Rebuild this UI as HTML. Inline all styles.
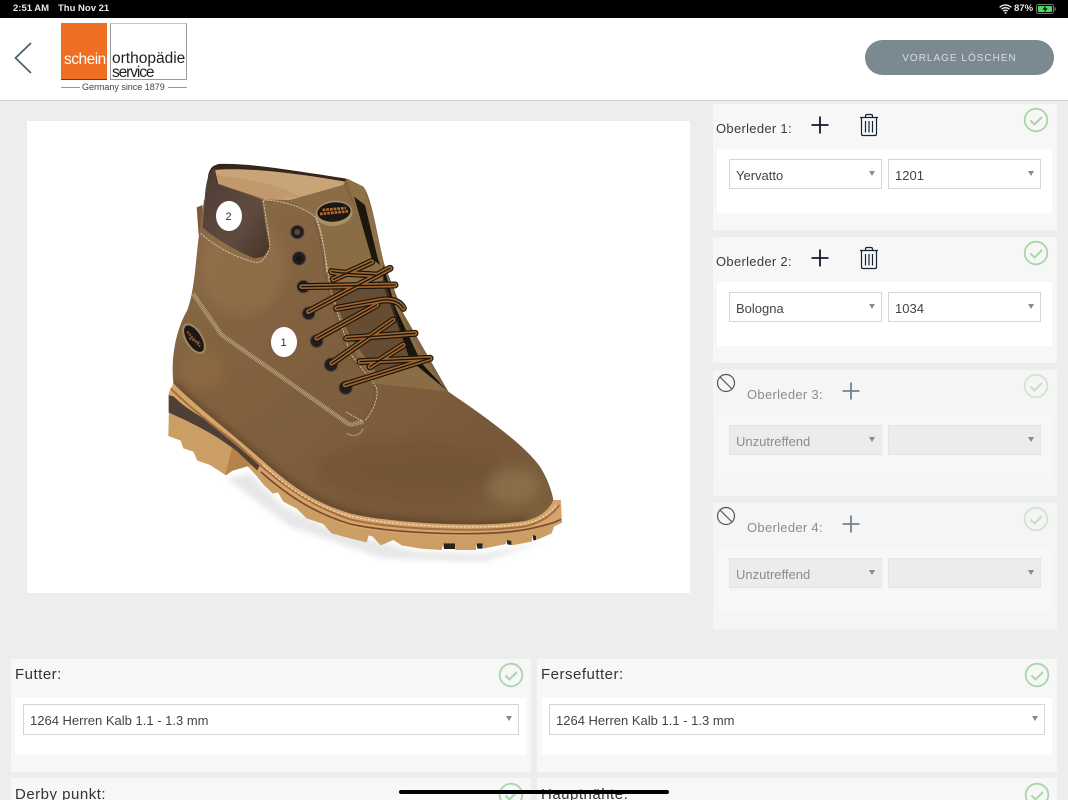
<!DOCTYPE html>
<html lang="de"><head><meta charset="utf-8"><title>Vorlage</title>
<style>
*{box-sizing:border-box}
html,body{margin:0;padding:0;width:1068px;height:800px;overflow:hidden}
#root{position:absolute;left:0;top:0;width:1068px;height:800px;overflow:hidden;background:#eceeed;font-family:"Liberation Sans","DejaVu Sans",sans-serif;color:#333}
.a{position:absolute}
.status{left:0;top:0;width:1068px;height:18px;background:#000;color:#e8e8e8;font-size:9.5px;line-height:18px;font-weight:bold}
.head{left:0;top:18px;width:1068px;height:83px;background:#fff;border-bottom:1.5px solid #cfd2d2}
.btn{left:865px;top:40px;width:189px;height:35px;border-radius:18px;background:#7b8991;color:#d9dee0;font-size:10px;letter-spacing:1px;line-height:37px;text-align:center}
.panel{background:#f7f7f7}
.inner{background:#fff}
.sel{background:#fff;border:1px solid #d4d6d6;border-bottom-width:1.5px;font-size:13px;color:#444;padding-left:6px;line-height:31px;white-space:nowrap}
.sel:after{content:"";position:absolute;right:6px;top:11px;border-left:3.5px solid transparent;border-right:3.5px solid transparent;border-top:5px solid #8a8a8a}
.lab{font-size:13px;letter-spacing:.3px;color:#3c3c3c;white-space:nowrap}
.lab2{font-size:15px;letter-spacing:.5px;color:#333;white-space:nowrap}
svg{display:block}
</style></head><body><div id="root">
<div class="a status"><span class="a" style="left:13px;white-space:nowrap">2:51 AM</span><span class="a" style="left:58px;white-space:nowrap">Thu Nov 21</span>
<svg class="a" style="left:999px;top:4px" width="13" height="10" viewBox="0 0 13 10"><path d="M.6 3.4a8.5 8.5 0 0 1 11.8 0M2.5 5.3a5.8 5.8 0 0 1 8 0M4.3 7.1a3.2 3.2 0 0 1 4.4 0" fill="none" stroke="#eee" stroke-width="1.4"/><circle cx="6.5" cy="8.7" r="1" fill="#eee"/></svg>
<span class="a" style="left:1014px;white-space:nowrap">87%</span>
<svg class="a" style="left:1036px;top:4px" width="21" height="10" viewBox="0 0 21 10"><rect x=".5" y=".5" width="17" height="9" rx="2" fill="none" stroke="#777"/><rect x="2" y="2" width="14" height="6" rx="1" fill="#4cd964"/><rect x="18.5" y="3.2" width="1.2" height="3.6" fill="#777"/><path d="M10 1 6.5 5.5h2.5L8 9l3.6-4.6H9z" fill="#000"/></svg>
</div>
<div class="a head"></div>
<svg class="a" style="left:13px;top:41px" width="20" height="34" viewBox="0 0 20 34"><path d="M18 2 2.5 17 18 32" fill="none" stroke="#4f626b" stroke-width="1.8"/></svg>

<div class="a" style="left:61px;top:23px;width:46px;height:57px;background:#ee6e22;border-bottom:1px solid #8a2a10"></div>
<div class="a" style="left:64px;top:51px;color:#fff;font-size:15.5px;letter-spacing:-.5px;line-height:18px">schein</div>
<div class="a" style="left:110px;top:23px;width:77px;height:57px;background:#fff;border:1px solid #9a9a9a;border-top-color:#c4c4c4"></div>
<div class="a" style="left:112px;top:51px;color:#222;font-size:15.5px;letter-spacing:0;line-height:15px;white-space:nowrap">orthopädie</div>
<div class="a" style="left:112px;top:65px;color:#222;font-size:15.5px;letter-spacing:-1.1px;line-height:15px;white-space:nowrap">service</div>
<div class="a" style="left:82px;top:82px;color:#444;font-size:9px;line-height:11px;white-space:nowrap;letter-spacing:-.02px">Germany since 1879</div>
<div class="a" style="left:61px;top:87px;width:19px;height:1px;background:#999"></div>
<div class="a" style="left:168px;top:87px;width:19px;height:1px;background:#999"></div>
<div class="a btn">VORLAGE LÖSCHEN</div>

<div class="a" style="left:27px;top:121px;width:663px;height:472px;background:#fff"></div>
<svg class="a" style="left:27px;top:121px" width="663" height="472" viewBox="27 121 663 472">
<defs>
<linearGradient id="lea" x1="0" y1="0" x2="1" y2="1"><stop offset="0" stop-color="#8c6d49"/><stop offset=".45" stop-color="#7f5f3d"/><stop offset=".8" stop-color="#775839"/><stop offset="1" stop-color="#7d623c"/></linearGradient>
<linearGradient id="col" x1="0" y1="0" x2="1" y2="1"><stop offset="0" stop-color="#4c3b32"/><stop offset=".6" stop-color="#5f4b40"/><stop offset="1" stop-color="#473429"/></linearGradient>
<filter id="soft" x="-5%" y="-5%" width="110%" height="110%"><feGaussianBlur stdDeviation=".5"/></filter>
<filter id="b1" x="-20%" y="-20%" width="140%" height="140%"><feGaussianBlur stdDeviation="9"/></filter>
<filter id="b2" x="-50%" y="-50%" width="200%" height="200%"><feGaussianBlur stdDeviation="18"/></filter>
<clipPath id="up"><path d="M70 700C62 620 78 540 112 480 134 420 136 340 146 262L162 150 200 100 345 148 420 150 580 105 590 85 640 110C665 140 680 250 702 340L760 490 895 725C990 790 1120 880 1170 950 1195 990 1207 1030 1210 1050 1200 1075 1175 1100 1130 1112 1000 1135 720 1120 600 1090 480 1055 410 995 330 925 240 845 140 770 70 700Z"/></clipPath>
</defs>
<g transform="translate(150 150) scale(.33333)" filter="url(#soft)">
<!-- shadow -->
<path d="M230 985 300 970 400 1070 540 1135 800 1205 1000 1212 1200 1170 1000 1235 700 1225 420 1130Z" fill="#c4c4c4" opacity=".4" filter="url(#b1)"/>
<!-- tread -->
<path d="M58 725 55 858 92 872 100 895 130 905 142 932 180 945 228 976 248 962 292 948 320 978 340 1003 368 1030 384 1028 400 1055 440 1076 470 1105 520 1122 545 1150 600 1165 650 1177 656 1156 668 1160 692 1186 730 1170 755 1186 812 1196 875 1200 880 1180 915 1180 916 1200 978 1200 980 1180 998 1180 1000 1196 1068 1182 1070 1170 1085 1186 1145 1175 1148 1155 1160 1170 1205 1150 1212 1130 1236 1118 1232 1050 700 1050 300 850 100 690Z" fill="#cb9e66"/>
<path d="M225 976 250 880 310 945 290 950 248 962Z" fill="#b58349"/>
<path d="M880 1180h35v17h-33zM980 1180h18v16h-16zM1070 1170l14 3 0 12-12-2zM1148 1155l10 3 0 12-8 1z" fill="#2b2118"/>
<!-- welt -->
<path d="M70 700C140 770 240 845 330 925 410 995 480 1055 600 1090 720 1120 1000 1135 1130 1112 1175 1100 1200 1075 1210 1050L1232 1052C1236 1085 1235 1100 1232 1112 1180 1130 1050 1158 950 1158 850 1158 700 1150 600 1130 520 1100 460 1065 400 1020L320 960C290 930 270 910 250 895 170 840 100 810 57 790L56 730Z" fill="#d5a56c"/>
<path d="M56 735 56 788C110 812 190 848 262 905L322 962 330 945C290 900 230 850 160 805 120 780 90 760 72 740Z" fill="#4f4136"/>
<path d="M62 715C130 785 240 860 330 945 410 1015 490 1070 600 1108 720 1138 1000 1150 1130 1128 1180 1115 1210 1090 1228 1065" fill="none" stroke="#a56f3f" stroke-width="6"/>
<path d="M332 965C410 1035 490 1088 600 1122 720 1150 1000 1162 1130 1138 1180 1128 1215 1118 1233 1108" fill="none" stroke="#7b4a2f" stroke-width="5"/>
<!-- far-side collar and lining -->
<path d="M140 172 158 165 158 255 146 255Z" fill="#7c5a38"/>
<path d="M190 48C172 62 165 100 190 115L345 155 600 120 640 110 585 85C420 60 290 38 205 42Z" fill="#36281f"/>
<path d="M195 60C300 50 470 75 585 95L600 150 345 155 205 105Z" fill="#c9a478"/>
<path d="M200 75C300 90 380 100 450 140L345 150 205 105Z" fill="#bb9265" opacity=".6"/>
<!-- main upper -->
<g clip-path="url(#up)">
<rect x="40" y="30" width="1200" height="1150" fill="url(#lea)"/>
<ellipse cx="1090" cy="1010" rx="80" ry="55" fill="#a2895f" opacity=".4" filter="url(#b2)"/>
<ellipse cx="280" cy="350" rx="130" ry="150" fill="#9d7b50" opacity=".4" filter="url(#b2)"/>
<ellipse cx="760" cy="960" rx="260" ry="80" fill="#6d5030" opacity=".4" filter="url(#b2)"/>
<ellipse cx="160" cy="660" rx="70" ry="60" fill="#a47747" opacity=".25" filter="url(#b2)"/>
<path d="M70 700C140 770 240 845 330 925 410 995 480 1055 600 1090 720 1120 1000 1135 1130 1112" fill="none" stroke="#4f3820" stroke-width="24" opacity=".45" filter="url(#b1)"/>
<!-- tongue -->
<path d="M420 150 580 105 625 190 700 340 770 520 895 725 670 700 590 560 535 400 525 280 495 200Z" fill="#8a6c45"/>
<path d="M590 85 640 110 668 190 702 340 680 340 620 180Z" fill="#8f7149"/>
<path d="M612 140 645 165 682 320 690 345 665 325Z" fill="#1a1510"/>
<path d="M700 345 735 470 815 640 895 725 780 630 730 490 700 405Z" fill="#17120d"/>
<path d="M702 340 760 490 895 725 870 700 770 530 720 400Z" fill="#7f6340"/>
<path d="M540 420 705 390 780 630 680 670 600 560Z" fill="#4f3a24" opacity=".6"/>
</g>
<!-- collar -->
<path d="M195 52C175 62 167 100 164 150L158 232C190 262 250 298 312 325L340 320 360 295 348 235 335 150 300 135 200 100Z" fill="url(#col)"/>
<!-- stitches -->
<path d="M152 250C190 285 250 322 320 338 345 335 352 310 360 290 355 240 345 190 340 150 390 150 460 170 495 200 515 230 525 300 530 370" fill="none" stroke="#d3c4a2" stroke-width="2.800" stroke-dasharray="7 3"/>
<path d="M497 203C515 250 528 320 540 410L600 610 678 710C688 735 675 775 645 812" fill="none" stroke="#d2c39d" stroke-width="2.600" stroke-dasharray="7 3"/>
<path d="M490 205C510 250 520 320 530 405L590 610 668 700C682 730 668 775 636 815" fill="none" stroke="#5c4428" stroke-width="2" opacity=".55"/>
<path d="M130 432 215 555 600 825 640 815" fill="none" stroke="#b7a27f" stroke-width="13" stroke-dasharray="3 2"/>
<path d="M590 850C610 862 630 858 640 835" fill="none" stroke="#b7a27f" stroke-width="5" stroke-dasharray="3 2"/>
<path d="M588 786 640 815" stroke="#d2c39d" stroke-width="3" stroke-dasharray="5 3" fill="none"/>
<!-- logos -->
<ellipse cx="552" cy="190" rx="56" ry="38" fill="#a78f66" transform="rotate(-6 552 190)"/>
<ellipse cx="552" cy="186" rx="50" ry="29" fill="#1e1814" transform="rotate(-6 552 186)"/>
<path d="M510 192l84-8M518 180l70-6" stroke="#b96a2f" stroke-width="8" stroke-dasharray="8 3"/>
<ellipse cx="132" cy="566" rx="27" ry="52" fill="#9c8860" transform="rotate(-32 132 566)"/>
<ellipse cx="132" cy="566" rx="21" ry="45" fill="#1e1814" transform="rotate(-32 132 566)"/>
<path d="M112 545 150 590M118 565 152 580" stroke="#9b5a2c" stroke-width="6" stroke-dasharray="6 3"/>
<!-- eyelets -->
<g fill="#231f1c" stroke="#4a4744" stroke-width="3">
<circle cx="442" cy="246" r="20"/><circle cx="447" cy="325" r="20"/><circle cx="460" cy="410" r="19"/><circle cx="476" cy="490" r="19"/><circle cx="500" cy="573" r="19"/><circle cx="543" cy="644" r="20"/><circle cx="587" cy="713" r="20"/></g>
<circle cx="442" cy="246" r="9" fill="#5a4636"/><circle cx="447" cy="325" r="9" fill="#17130f"/>
<!-- laces -->
<g fill="none" stroke-linecap="round">
<g stroke="#19130e" stroke-width="21">
<path d="M545 365C590 372 640 372 675 375M550 388 665 335"/>
<path d="M560 475 700 450C730 448 750 455 760 475M590 565 795 550M630 635 840 625M660 650 760 585"/>
<path d="M455 410 735 405M475 485 720 355M500 565 680 465M545 640 730 510M585 705 840 625"/>
</g>
<g stroke="#a0652f" stroke-width="14">
<path d="M545 365C590 372 640 372 675 375M550 388 665 335"/>
<path d="M560 475 700 450C730 448 750 455 760 475M590 565 795 550M630 635 840 625M660 650 760 585"/>
<path d="M455 410 735 405M475 485 720 355M500 565 680 465M545 640 730 510M585 705 840 625"/>
</g>
<g stroke="#1e1711" stroke-width="4">
<path d="M545 365C590 372 640 372 675 375M550 388 665 335"/>
<path d="M560 475 700 450C730 448 750 455 760 475M590 565 795 550M630 635 840 625M660 650 760 585"/>
<path d="M455 410 735 405M475 485 720 355M500 565 680 465M545 640 730 510M585 705 840 625"/>
</g></g>
<path d="M340 945C410 1012 490 1068 600 1098 720 1128 1000 1142 1130 1120 1175 1110 1205 1085 1222 1062" fill="none" stroke="#efe3c8" stroke-width="3" stroke-dasharray="7 5"/>
</g>
<ellipse cx="229" cy="216" rx="13" ry="15" fill="#fff"/>
<ellipse cx="284" cy="342" rx="13" ry="15" fill="#fff"/>
<text x="228.500" y="220" font-size="11" text-anchor="middle" fill="#333" font-family="Liberation Sans, sans-serif">2</text>
<text x="283.500" y="346" font-size="11" text-anchor="middle" fill="#333" font-family="Liberation Sans, sans-serif">1</text>
</svg>

<!-- Oberleder 1 -->
<div class="a panel" style="left:713px;top:104px;width:344px;height:126px"></div>
<div class="a inner" style="left:717px;top:149px;width:335px;height:64px"></div>
<div class="a lab" style="left:716px;top:121px">Oberleder 1:</div>
<svg class="a" style="left:810px;top:115px" width="20" height="20"><path d="M10 1.500v17M1.500 10h17" stroke="#0f1a2b" stroke-width="1.800"/></svg>
<svg class="a" style="left:858px;top:113px" width="22" height="24" viewBox="0 0 22 24"><path d="M2 4.500h18M7.500 4.500V3q0-1.500 1.500-1.500h4q1.500 0 1.500 1.500v1.500M3.500 4.500V21q0 1.500 1.500 1.500h12q1.500 0 1.500-1.500V4.500M7.500 8v11.500M11 8v11.500M14.500 8v11.500" fill="none" stroke="#14233a" stroke-width="1.200"/></svg>
<svg class="a" style="left:1023px;top:107px" width="26" height="26"><circle cx="13" cy="13" r="11.300" fill="none" stroke="#a9d6a9" stroke-width="1.800"/><path d="M7.500 13.500l4 4 7.500-7.500" fill="none" stroke="#a9d6a9" stroke-width="2"/></svg>
<div class="a sel" style="left:729px;top:159px;width:153px;height:30px">Yervatto</div>
<div class="a sel" style="left:888px;top:159px;width:153px;height:30px">1201</div>

<!-- Oberleder 2 -->
<div class="a panel" style="left:713px;top:237px;width:344px;height:126px"></div>
<div class="a inner" style="left:717px;top:282px;width:335px;height:64px"></div>
<div class="a lab" style="left:716px;top:254px">Oberleder 2:</div>
<svg class="a" style="left:810px;top:248px" width="20" height="20"><path d="M10 1.500v17M1.500 10h17" stroke="#0f1a2b" stroke-width="1.800"/></svg>
<svg class="a" style="left:858px;top:246px" width="22" height="24" viewBox="0 0 22 24"><path d="M2 4.500h18M7.500 4.500V3q0-1.500 1.500-1.500h4q1.500 0 1.500 1.500v1.500M3.500 4.500V21q0 1.500 1.500 1.500h12q1.500 0 1.500-1.500V4.500M7.500 8v11.500M11 8v11.500M14.500 8v11.500" fill="none" stroke="#14233a" stroke-width="1.200"/></svg>
<svg class="a" style="left:1023px;top:240px" width="26" height="26"><circle cx="13" cy="13" r="11.300" fill="none" stroke="#a9d6a9" stroke-width="1.800"/><path d="M7.500 13.500l4 4 7.500-7.500" fill="none" stroke="#a9d6a9" stroke-width="2"/></svg>
<div class="a sel" style="left:729px;top:292px;width:153px;height:30px">Bologna</div>
<div class="a sel" style="left:888px;top:292px;width:153px;height:30px">1034</div>

<!-- Oberleder 3 -->
<div class="a panel" style="left:713px;top:370px;width:344px;height:126px;background:#f5f5f5"></div>
<div class="a" style="left:717px;top:414px;width:335px;height:65px;background:#f6f8f7"></div>
<svg class="a" style="left:716px;top:373px" width="20" height="20"><circle cx="10" cy="10" r="8.500" fill="none" stroke="#555" stroke-width="1.200"/><path d="M4 4l12 12" stroke="#555" stroke-width="1.200"/></svg>
<div class="a lab" style="left:747px;top:387px;color:#8b8d8d">Oberleder 3:</div>
<svg class="a" style="left:841px;top:381px" width="20" height="20"><path d="M10 1.500v17M1.500 10h17" stroke="#73818c" stroke-width="1.800"/></svg>
<svg class="a" style="left:1023px;top:373px" width="26" height="26"><circle cx="13" cy="13" r="11.300" fill="none" stroke="#cde6cd" stroke-width="1.800"/><path d="M7.500 13.500l4 4 7.500-7.500" fill="none" stroke="#c4e0c4" stroke-width="2"/></svg>
<div class="a sel" style="left:729px;top:425px;width:153px;height:30px;background:#ebecec;border-color:#e3e5e5;color:#8b8d8d">Unzutreffend</div>
<div class="a sel" style="left:888px;top:425px;width:153px;height:30px;background:#ebecec;border-color:#e3e5e5"></div>

<!-- Oberleder 4 -->
<div class="a panel" style="left:713px;top:503px;width:344px;height:126px;background:#f5f5f5"></div>
<div class="a" style="left:717px;top:547px;width:335px;height:65px;background:#f6f8f7"></div>
<svg class="a" style="left:716px;top:506px" width="20" height="20"><circle cx="10" cy="10" r="8.500" fill="none" stroke="#555" stroke-width="1.200"/><path d="M4 4l12 12" stroke="#555" stroke-width="1.200"/></svg>
<div class="a lab" style="left:747px;top:520px;color:#8b8d8d">Oberleder 4:</div>
<svg class="a" style="left:841px;top:514px" width="20" height="20"><path d="M10 1.500v17M1.500 10h17" stroke="#73818c" stroke-width="1.800"/></svg>
<svg class="a" style="left:1023px;top:506px" width="26" height="26"><circle cx="13" cy="13" r="11.300" fill="none" stroke="#cde6cd" stroke-width="1.800"/><path d="M7.500 13.500l4 4 7.500-7.500" fill="none" stroke="#c4e0c4" stroke-width="2"/></svg>
<div class="a sel" style="left:729px;top:558px;width:153px;height:30px;background:#ebecec;border-color:#e3e5e5;color:#8b8d8d">Unzutreffend</div>
<div class="a sel" style="left:888px;top:558px;width:153px;height:30px;background:#ebecec;border-color:#e3e5e5"></div>

<!-- Futter -->
<div class="a panel" style="left:11px;top:659px;width:520px;height:113px"></div>
<div class="a inner" style="left:15px;top:698px;width:511px;height:57px"></div>
<div class="a lab2" style="left:15px;top:666px">Futter:</div>
<svg class="a" style="left:498px;top:662px" width="26" height="26"><circle cx="13" cy="13" r="11.300" fill="none" stroke="#a9d6a9" stroke-width="1.800"/><path d="M7.500 13.500l4 4 7.500-7.500" fill="none" stroke="#a9d6a9" stroke-width="2"/></svg>
<div class="a sel" style="left:23px;top:704px;width:496px;height:31px">1264 Herren Kalb 1.1 - 1.3 mm</div>

<!-- Fersefutter -->
<div class="a panel" style="left:537px;top:659px;width:520px;height:113px"></div>
<div class="a inner" style="left:542px;top:698px;width:510px;height:57px"></div>
<div class="a lab2" style="left:541px;top:666px">Fersefutter:</div>
<svg class="a" style="left:1024px;top:662px" width="26" height="26"><circle cx="13" cy="13" r="11.300" fill="none" stroke="#a9d6a9" stroke-width="1.800"/><path d="M7.500 13.500l4 4 7.500-7.500" fill="none" stroke="#a9d6a9" stroke-width="2"/></svg>
<div class="a sel" style="left:549px;top:704px;width:496px;height:31px">1264 Herren Kalb 1.1 - 1.3 mm</div>

<!-- next row -->
<div class="a panel" style="left:11px;top:778px;width:520px;height:22px"></div>
<div class="a lab2" style="left:15px;top:786px">Derby punkt:</div>
<svg class="a" style="left:498px;top:782px" width="26" height="26"><circle cx="13" cy="13" r="11.300" fill="none" stroke="#a9d6a9" stroke-width="1.800"/><path d="M7.500 13.500l4 4 7.500-7.500" fill="none" stroke="#a9d6a9" stroke-width="2"/></svg>
<div class="a panel" style="left:537px;top:778px;width:520px;height:22px"></div>
<div class="a lab2" style="left:541px;top:786px">Hauptnähte:</div>
<svg class="a" style="left:1024px;top:782px" width="26" height="26"><circle cx="13" cy="13" r="11.300" fill="none" stroke="#a9d6a9" stroke-width="1.800"/><path d="M7.500 13.500l4 4 7.500-7.500" fill="none" stroke="#a9d6a9" stroke-width="2"/></svg>
<div class="a" style="left:399px;top:789.500px;width:270px;height:4px;border-radius:2px;background:#000"></div>
</div></body></html>
